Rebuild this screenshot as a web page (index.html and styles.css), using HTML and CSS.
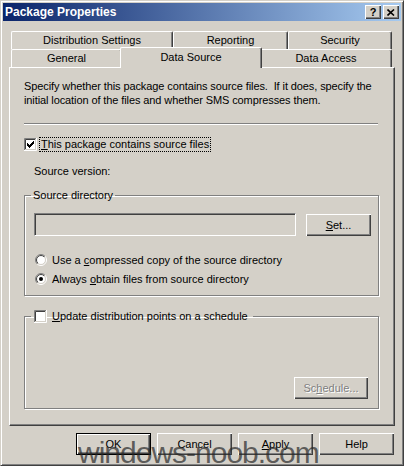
FILE: index.html
```html
<!DOCTYPE html>
<html lang="en">
<head>
  <meta charset="UTF-8" />
  <title>Package Properties</title>
  <link rel="stylesheet" href="styles.css">
</head>
<body>

  <div class="window">
    <div class="titlebar">
      <span class="title">Package Properties</span>
      <div class="caption-btns">
        <span class="cap-btn">?</span>
        <span class="cap-btn">
          <svg width="8" height="7" viewBox="0 0 8 7"><path d="M0.5 0.5L7 6.5M7 0.5L0.5 6.5" stroke="#000" stroke-width="1.6"/></svg>
        </span>
      </div>
    </div>

    <div class="body">
      <div class="tabs">
        <div class="tab-row">
          <div class="tab w-dist">Distribution Settings</div>
          <div class="tab w-rep">Reporting</div>
          <div class="tab w-sec">Security</div>
        </div>
        <div class="tab-row">
          <div class="tab w-gen">General</div>
          <div class="tab w-src selected">Data Source</div>
          <div class="tab w-acc">Data Access</div>
        </div>
      </div>

      <div class="panel">
        <p class="desc">Specify whether this package contains source files.&nbsp; If it does, specify the<br>initial location of the files and whether SMS compresses them.</p>
        <div class="sep"></div>

        <div class="check-row">
          <svg class="checkbox" width="13" height="13" viewBox="0 0 13 13">
            <rect x="2" y="2" width="9" height="9" fill="#fff"/>
            <path d="M0.5 12V0.5H12" stroke="#808080" fill="none"/>
            <path d="M1.5 11V1.5H11" stroke="#404040" fill="none"/>
            <path d="M0 12.5H12.5V0" stroke="#fff" fill="none"/>
            <path d="M1 11.5H11.5V1" stroke="#d4d0c8" fill="none"/>
            <path d="M3.5 5v3M4.5 6v3M5.5 7v3M6.5 6v3M7.5 5v3M8.5 4v3M9.5 3v3" stroke="#000"/>
          </svg>
          <span class="focus"><u>T</u>his package contains source files</span>
        </div>

        <div class="version">Source version:</div>

        <fieldset class="group">
          <legend class="legend-text">Source directory</legend>
          <div class="dir-row">
            <div class="textbox"></div>
            <span class="btn set-btn"><u>S</u>et...</span>
          </div>
          <div class="radio-row first">
            <svg class="radio" width="12" height="12" viewBox="0 0 12 12">
              <defs>
                <linearGradient id="outer" x1="0" y1="0" x2="1" y2="1">
                  <stop offset="0.5" stop-color="#808080"/>
                  <stop offset="0.5" stop-color="#fff"/>
                </linearGradient>
                <linearGradient id="inner" x1="0" y1="0" x2="1" y2="1">
                  <stop offset="0.5" stop-color="#404040"/>
                  <stop offset="0.5" stop-color="#d4d0c8"/>
                </linearGradient>
              </defs>
              <circle cx="6" cy="6" r="5.5" fill="none" stroke="url(#outer)"/>
              <circle cx="6" cy="6" r="4.5" fill="#fff" stroke="url(#inner)"/>
            </svg>
            <span>Use a <u>c</u>ompressed copy of the source directory</span>
          </div>
          <div class="radio-row">
            <svg class="radio" width="12" height="12" viewBox="0 0 12 12">
              <circle cx="6" cy="6" r="5.5" fill="none" stroke="url(#outer)"/>
              <circle cx="6" cy="6" r="4.5" fill="#fff" stroke="url(#inner)"/>
              <circle cx="6" cy="6" r="2" fill="#000"/>
            </svg>
            <span>Always <u>o</u>btain files from source directory</span>
          </div>
        </fieldset>

        <fieldset class="group schedule-group">
          <legend class="legend-check">
            <svg class="checkbox" width="13" height="13" viewBox="0 0 13 13">
              <rect x="2" y="2" width="9" height="9" fill="#fff"/>
              <path d="M0.5 12V0.5H12" stroke="#808080" fill="none"/>
              <path d="M1.5 11V1.5H11" stroke="#404040" fill="none"/>
              <path d="M0 12.5H12.5V0" stroke="#fff" fill="none"/>
              <path d="M1 11.5H11.5V1" stroke="#d4d0c8" fill="none"/>
            </svg>
            <span><u>U</u>pdate distribution points on a schedule</span>
          </legend>
          <div class="schedule-area">
            <span class="btn disabled">Sc<u>h</u>edule...</span>
          </div>
        </fieldset>
      </div>

      <div class="buttons">
        <span class="btn default">OK</span>
        <span class="btn">Cancel</span>
        <span class="btn"><u>A</u>pply</span>
        <span class="btn">Help</span>
      </div>
    </div>

    <div class="watermark">windows-noob.com</div>
  </div>

</body>
</html>
```

FILE: styles.css
```css
body {
  margin: 0;
  font-family: "Liberation Sans", Arial, sans-serif;
  font-size: 11px;
  color: #000;
  background-color: #d4d0c8;
}

.window {
  position: relative;
  width: 404px;
  height: 466px;
  box-sizing: border-box;
  padding: 2px;
  border: 1px solid;
  border-color: #d4d0c8 #404040 #404040 #d4d0c8;
  box-shadow: inset 1px 1px #fff, inset -1px -1px #808080;
  background-color: #d4d0c8;
  overflow: hidden;
}

/* title bar */
.titlebar {
  height: 18px;
  display: flex;
  align-items: center;
  padding-left: 2px;
  background: linear-gradient(to right, #0a246a, #a6caf0);
  color: #fff;
}

.title {
  font-weight: bold;
  font-size: 12px;
}

.caption-btns {
  margin-left: auto;
  margin-right: 2px;
  display: flex;
  gap: 2px;
}

.cap-btn {
  width: 16px;
  height: 14px;
  box-sizing: border-box;
  display: flex;
  align-items: center;
  justify-content: center;
  background-color: #d4d0c8;
  color: #000;
  font-weight: bold;
  font-size: 11px;
  box-shadow: inset 1px 1px #fff, inset -1px -1px #404040, inset -2px -2px #808080;
}

.body {
  padding: 0 6px;
}

/* tabs */
.tabs {
  margin: 10px 3px 0 2px;
}

.tab-row {
  display: flex;
  align-items: flex-start;
  height: 18px;
}

.tab {
  box-sizing: border-box;
  height: 18px;
  line-height: 17px;
  text-align: center;
  border-top: 1px solid #fff;
  border-left: 1px solid #fff;
  border-right: 1px solid #404040;
  border-radius: 2px 2px 0 0;
  box-shadow: inset -1px 0 #808080;
  background-color: #d4d0c8;
}

.w-dist { width: 162px; }
.w-rep { width: 115px; }
.w-sec { width: 104px; }
.w-gen { width: 111px; }
.w-src { width: 138px; }
.w-acc { width: 132px; }

.tab.selected {
  position: relative;
  z-index: 1;
  width: 142px;
  height: 21px;
  margin: -2px -2px 0;
  line-height: 18px;
}

/* page */
.panel {
  height: 359px;
  box-sizing: border-box;
  padding: 11px 15px 0 14px;
  border: 1px solid;
  border-color: #fff #404040 #404040 #fff;
  box-shadow: inset -1px -1px #808080;
}

.desc {
  margin: 0;
  line-height: 14px;
  white-space: nowrap;
  letter-spacing: -0.1px;
}

.sep {
  margin: 16px 1px 0 0;
  border-top: 1px solid #808080;
  border-bottom: 1px solid #fff;
}

.check-row {
  display: flex;
  align-items: center;
  gap: 3px;
  height: 13px;
  margin-top: 13px;
}

.checkbox {
  display: block;
  flex: none;
}

.focus {
  outline: 1px dotted #000;
  padding: 0 1px;
  line-height: 13px;
}

.version {
  margin: 13px 0 0 10px;
  line-height: 14px;
}

.group {
  margin: 10px 0 0;
  padding: 0 7px 7px 9px;
  min-width: 0;
  border: 1px solid #808080;
  box-shadow: inset 1px 1px #fff, 1px 1px #fff;
}

.group legend {
  line-height: 14px;
}

.legend-text {
  margin-left: -3px;
  padding: 0 2px;
}

.dir-row {
  display: flex;
  align-items: center;
  gap: 10px;
  margin-top: 11px;
}

.textbox {
  width: 262px;
  height: 23px;
  box-sizing: border-box;
  border: 1px solid;
  border-color: #808080 #fff #fff #808080;
  box-shadow: inset 1px 1px #404040, inset -1px -1px #d4d0c8;
}

.btn {
  display: flex;
  align-items: center;
  justify-content: center;
  width: 75px;
  height: 22px;
  box-sizing: border-box;
  background-color: #d4d0c8;
  box-shadow: inset 1px 1px #fff, inset -1px -1px #404040, inset -2px -2px #808080;
}

.set-btn {
  width: 65px;
}

.radio-row {
  display: flex;
  align-items: center;
  gap: 5px;
  height: 19px;
  padding-left: 1px;
}

.radio-row.first {
  margin-top: 14px;
}

.radio {
  display: block;
  flex: none;
}

.schedule-group {
  margin-top: 13px;
  padding: 0 10px 9px 9px;
}

.legend-check {
  display: flex;
  align-items: center;
  gap: 5px;
  margin-left: -3px;
  padding: 0 5px 0 3px;
}

.schedule-area {
  height: 76px;
  display: flex;
  align-items: flex-end;
  justify-content: flex-end;
}

.btn.disabled {
  width: 74px;
  color: #808080;
  text-shadow: 1px 1px #fff;
}

/* dialog buttons */
.buttons {
  display: flex;
  justify-content: flex-end;
  gap: 6px;
  margin: 7px 1px 0 0;
}

.btn.default {
  border: 1px solid #000;
}

.watermark {
  position: absolute;
  left: 77px;
  top: 437px;
  font-size: 30px;
  line-height: 30px;
  letter-spacing: -1px;
  color: rgba(40, 40, 40, 0.7);
  pointer-events: none;
}
```
